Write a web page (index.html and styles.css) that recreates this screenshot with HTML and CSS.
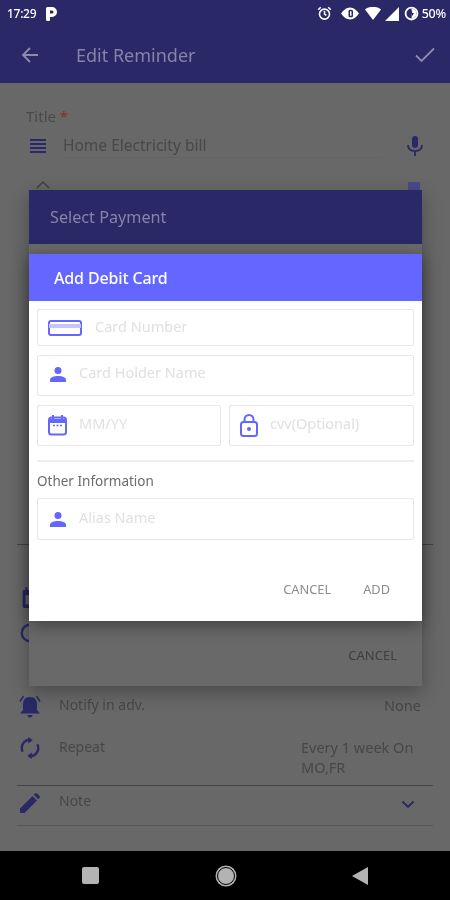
FILE: index.html
```html
<!DOCTYPE html>
<html lang="en">
<head>
<meta charset="utf-8">
<title>Edit Reminder</title>
<link rel="stylesheet" href="styles.css">
</head>
<body>
<div class="phone">
  <header class="top">
    <div class="status">
      <div class="status-left">
        <span class="clock">17:29</span>
        <svg class="sicon" width="14" height="16" viewBox="0 0 14 16"><path fill="#fff" d="M2 2.500a1.500 1.500 0 0 1 1.500-1.500H8a5 5 0 0 1 0 10H6v3a1 1 0 0 1-1 1H3.500A1.500 1.500 0 0 1 2 13.500z"/><path fill="#2a2866" d="M6 4.500h2a1.500 1.500 0 0 1 0 3H6z"/></svg>
      </div>
      <div class="status-right">
        <svg width="15" height="15" viewBox="0 0 24 24"><circle cx="12" cy="13" r="8" fill="none" stroke="#fff" stroke-width="2.500"/><path d="M12 8v5l3 2M2 6l4-4M22 6l-4-4" fill="none" stroke="#fff" stroke-width="2.500"/></svg>
        <svg class="eye" width="18" height="15" viewBox="0 0 24 18"><path fill="#fff" d="M12 1c5 0 9 4 12 8-3 4-7 8-12 8S3 13 0 9c3-4 7-8 12-8z"/><rect x="10" y="4" width="6" height="10" rx="2" fill="#2a2866"/><rect x="12" y="6" width="2" height="6" fill="#fff"/></svg>
        <svg class="wifi" width="16" height="13" viewBox="0 0 16 13"><path fill="#fff" d="M0 2.500C4-1 12-1 16 2.500L8 13z"/></svg>
        <svg width="14" height="14" viewBox="0 0 14 14"><path fill="#fff" d="M14 0v14H0z"/></svg>
        <svg class="batt" width="15" height="15" viewBox="0 0 24 24"><circle cx="12" cy="12" r="9.500" fill="none" stroke="#fff" stroke-width="3"/><path fill="#fff" d="M12 4a8 8 0 0 1 0 16z"/><path fill="#2a2866" d="M13 6l-4 7h3v5l4-7h-3z"/></svg>
        <span class="battery">50%</span>
      </div>
    </div>
    <div class="appbar">
      <svg class="back" width="18" height="18" viewBox="0 0 18 18"><path d="M17 9H2M9 2 2 9l7 7" fill="none" stroke="#8d8cad" stroke-width="1.800"/></svg>
      <h1 class="apptitle">Edit Reminder</h1>
      <svg class="check" width="20" height="16" viewBox="0 0 20 16"><path d="M1 8.500 6.500 14 19 1.500" fill="none" stroke="#8d8cad" stroke-width="1.800"/></svg>
    </div>
  </header>

  <main class="content">
    <div class="field-label">Title <span class="req">*</span></div>
    <div class="title-row">
      <svg width="18" height="16" viewBox="0 0 18 16"><path d="M1 2h16M1 6h16M1 10h16M1 14h16" stroke="#2a2866" stroke-width="1.800"/></svg>
      <span class="title-text">Home Electricity bill</span>
      <svg class="mic" width="18" height="22" viewBox="0 0 18 22"><rect x="6" y="1" width="6" height="12" rx="3" fill="#2a2866"/><path d="M2 10c0 4 3 6 7 6s7-2 7-6M9 16v5" fill="none" stroke="#2a2866" stroke-width="1.800"/></svg>
    </div>
    <div class="peek">
      <svg width="14" height="12" viewBox="0 0 14 12"><path d="M1 8 7 2l6 6" fill="none" stroke="#3f3f3f" stroke-width="1.500"/></svg>
      <svg width="14" height="12" viewBox="0 0 14 12"><rect x="1" y="2" width="12" height="10" fill="#4a4a8c"/></svg>
    </div>
    <div class="rows">
      <div class="row">
        <svg class="ricon" width="22" height="22" viewBox="0 0 24 24"><path fill="#2a2866" d="M6 3h12a2 2 0 0 1 2 2v16a2 2 0 0 1-2 2H6a2 2 0 0 1-2-2V5a2 2 0 0 1 2-2zM7 0h2v4H7zM15 0h2v4h-2z"/><rect x="7" y="9" width="10" height="10" fill="#686868"/></svg>
      </div>
      <div class="row">
        <svg class="ricon" width="22" height="22" viewBox="0 0 24 24"><circle cx="12" cy="13" r="9" fill="none" stroke="#2a2866" stroke-width="2.500"/></svg>
      </div>
      <div class="row notify">
        <svg class="ricon" width="22" height="24" viewBox="0 0 22 24"><path fill="#2a2866" d="M11 2c5 0 7 3 7 7.500V15l3 3.500H1L4 15V9.500C4 5 6 2 11 2zM8.500 20h5a2.500 2.500 0 0 1-5 0z"/><path d="M4.500 1 1 6.500M17.500 1 21 6.500" stroke="#2a2866" stroke-width="1.500"/></svg>
        <span class="rlabel">Notify in adv.</span>
        <span class="rvalue">None</span>
      </div>
      <div class="row repeat">
        <svg class="ricon" width="20" height="22" viewBox="0 0 24 24"><path d="M4 16a9 9 0 0 1 9-13M20 8a9 9 0 0 1-9 13" fill="none" stroke="#2a2866" stroke-width="2.600"/><path fill="#2a2866" d="M10 0l5 3.500L10 7zM14 24l-5-3.500L14 17z"/></svg>
        <span class="rlabel">Repeat</span>
        <span class="rvalue multi">Every 1 week On<br>MO,FR</span>
      </div>
      <div class="row note">
        <svg class="ricon" width="20" height="20" viewBox="0 0 20 20"><path fill="#2a2866" d="M0 20v-4.500L12.500 3l4.500 4.500L4.500 20zM13.800 1.700 15 .5a1.500 1.500 0 0 1 2 0l2.500 2.500a1.500 1.500 0 0 1 0 2l-1.200 1.200z"/></svg>
        <span class="rlabel notelabel">Note</span>
        <svg class="chev" width="14" height="9" viewBox="0 0 14 9"><path d="M1.500 1.500 7 7l5.500-5.500" fill="none" stroke="#2a2866" stroke-width="1.800"/></svg>
      </div>
    </div>
    <hr class="rule mid">

    <section class="dialog under">
      <div class="under-head">Select Payment</div>
      <div class="under-foot">CANCEL</div>
    </section>

    <section class="dialog over">
      <div class="over-head">Add Debit Card</div>
      <div class="form">
        <div class="box first">
          <svg class="card" width="34" height="16" viewBox="0 0 34 16"><rect x="1" y="1" width="32" height="14" rx="2" fill="none" stroke="#6366ff" stroke-width="2"/><rect x="1" y="4" width="32" height="4" fill="#c5c6ff"/></svg>
          <span class="ph">Card Number</span>
        </div>
        <div class="box second">
          <svg class="person" width="16" height="16" viewBox="0 0 16 16"><circle cx="8" cy="4.500" r="3.500" fill="#6366ff"/><path fill="#6366ff" d="M0 16v-2c0-3 4-4 8-4s8 1 8 4v2z"/></svg>
          <span class="ph">Card Holder Name</span>
        </div>
        <div class="split">
          <div class="box">
            <svg width="19" height="22" viewBox="0 0 19 22"><rect x="1" y="3.500" width="17" height="17" rx="2.500" fill="none" stroke="#6366ff" stroke-width="2"/><path d="M1 7h17" stroke="#6366ff" stroke-width="4"/><path d="M5 1v4M14 1v4" stroke="#6366ff" stroke-width="2"/><path d="M5 11.500h9" stroke="#6366ff" stroke-width="1.500" stroke-dasharray="2 1.500"/></svg>
            <span class="ph">MM/YY</span>
          </div>
          <div class="box">
            <svg width="18" height="23" viewBox="0 0 18 23"><rect x="1" y="8" width="16" height="14" rx="2.500" fill="none" stroke="#6366ff" stroke-width="2"/><path d="M4.500 8V5.500a4.500 4.500 0 0 1 9 0V8" fill="none" stroke="#6366ff" stroke-width="2"/><circle cx="9" cy="15" r="2" fill="#6366ff"/></svg>
            <span class="ph">cvv(Optional)</span>
          </div>
        </div>
        <hr class="sep">
        <div class="other">Other Information</div>
        <div class="box alias">
          <svg class="person" width="16" height="16" viewBox="0 0 16 16"><circle cx="8" cy="4.500" r="3.500" fill="#6366ff"/><path fill="#6366ff" d="M0 16v-2c0-3 4-4 8-4s8 1 8 4v2z"/></svg>
          <span class="ph">Alias Name</span>
        </div>
      </div>
      <div class="actions">
        <span class="action">CANCEL</span>
        <span class="action">ADD</span>
      </div>
    </section>
  </main>

  <nav class="navbar">
    <span class="nav-square"></span>
    <span class="nav-circle"></span>
    <svg width="16" height="18" viewBox="0 0 16 18"><path fill="#b3b3b3" d="M16 0v18L0 9z"/></svg>
  </nav>
</div>
</body>
</html>
```

FILE: styles.css
```css
* { box-sizing: border-box; }
html, body { margin: 0; padding: 0; }
body { width: 450px; height: 900px; overflow: hidden; background: #000; font-family: "Noto Sans", "Open Sans", sans-serif; }
.phone { width: 450px; height: 900px; display: flex; flex-direction: column; filter: blur(0.5px); }

.top { background: #2a2866; height: 83px; flex: none; }
.status { height: 27px; padding: 0 4px 0 7px; display: flex; justify-content: space-between; align-items: center; color: #fff; }
.status-left { display: flex; align-items: center; gap: 8px; }
.status-right { display: flex; align-items: center; gap: 4px; }
.eye { margin-left: 5px; }
.wifi { margin-left: 2px; }
.batt { margin-left: 1px; }
.clock { font-size: 12px; letter-spacing: -0.3px; font-weight: 500; }
.battery { font-size: 12.500px; font-weight: 500; margin-left: -1px; letter-spacing: -0.2px; }
.appbar { height: 56px; display: flex; align-items: center; padding: 0 15px 0 21px; }
.apptitle { margin: 0 0 0 37px; font-size: 18px; font-weight: 400; color: #8584a8; flex: 1; }

.content { position: relative; flex: 1; background: #686868; padding: 24px 28px 0 26px; }
.field-label { font-size: 15px; line-height: 18px; color: #4a4a4a; }
.req { color: #8a2c2c; }
.title-row { display: flex; align-items: center; margin-top: 9px; height: 24px; padding-left: 3px; }
.title-text { margin-left: 16px; padding-bottom: 1px; margin-right: 24px; font-size: 15.500px; color: #484848; flex: 1; border-bottom: 1px solid #636363; }
.mic { margin-right: -2px; }
.peek { display: flex; justify-content: space-between; margin-top: 22px; padding: 0 1px 0 10px; }
.rows { position: absolute; left: 17px; right: 17px; top: 504px; }
.row { display: flex; align-items: flex-start; position: relative; padding: 0 12px 0 2px; }
.ricon { flex: none; width: 22px; }
.row:nth-child(1) { height: 34px; }
.row:nth-child(2) { height: 74px; }
.notify { height: 42px; }
.repeat { min-height: 49px; border-bottom: 1px solid #454545; }
.note { height: 40px; padding-top: 7px; border-bottom: 1px solid #555; }
.rlabel { margin-left: 18px; font-size: 14px; line-height: 20px; color: #474747; flex: 1; }
.notelabel { margin-top: -2px; }
.rvalue { font-size: 14.500px; line-height: 20px; color: #474747; }
.multi { width: 120px; }
.chev { margin: 7px 6px 0 0; }
.rule { position: absolute; left: 17px; right: 17px; margin: 0; border: 0; border-top: 1px solid #454545; }
.mid { top: 461px; }

.dialog { position: absolute; left: 29px; width: 393px; }
.under { top: 107px; height: 496px; background: #696969; box-shadow: 0 6px 18px rgba(0,0,0,.3); display: flex; flex-direction: column; justify-content: space-between; }
.under-head { height: 54px; background: #2a2866; color: #8584a8; font-size: 16.200px; display: flex; align-items: center; padding-left: 21px; }
.under-foot { padding: 0 25px 22px 0; text-align: right; font-size: 13px; color: #3f3f3f; }
.over { top: 171px; height: 367px; background: #fff; box-shadow: 0 4px 16px rgba(0,0,0,.4); display: flex; flex-direction: column; }
.over-head { height: 47px; flex: none; background: #6366ff; color: #fff; font-size: 16px; font-weight: 500; letter-spacing: -0.15px; display: flex; align-items: center; padding-left: 25px; }
.form { padding: 8px 8px 0; flex: 1; }
.box { display: flex; align-items: center; border: 1.500px solid #e8e8e8; border-radius: 2px; padding-left: 10px; }
.first { height: 37px; gap: 13px; }
.second { height: 41px; margin-top: 9px; gap: 13px; padding-bottom: 3px; padding-left: 12px; }
.split { display: grid; grid-template-columns: 184px 185px; gap: 8px; margin-top: 9px; }
.split .box { height: 41px; gap: 12px; padding-bottom: 1px; }
.ph { font-size: 14.500px; color: #e0e0e0; margin-top: -4px; }
.sep { margin: 14px 0 0; border: 0; border-top: 2px solid #eeeeee; }
.other { margin-top: 10px; font-size: 13.500px; line-height: 18px; color: #6c6c6c; }
.alias { height: 42px; margin-top: 8px; gap: 13px; padding-left: 12px; }
.actions { height: 64px; flex: none; display: flex; justify-content: flex-end; gap: 32px; padding: 23px 32px 0 0; }
.action { font-size: 12.800px; line-height: 18px; color: #8c8c8c; }

.navbar { height: 49px; flex: none; background: #000; display: flex; align-items: center; justify-content: space-between; padding: 0 82px; }
.nav-square { width: 17px; height: 17px; background: #b3b3b3; border-radius: 2px; }
.nav-circle { width: 18px; height: 18px; border-radius: 50%; background: #b3b3b3; border: 1.500px solid #000; box-shadow: 0 0 0 1.500px #b3b3b3; }
```
